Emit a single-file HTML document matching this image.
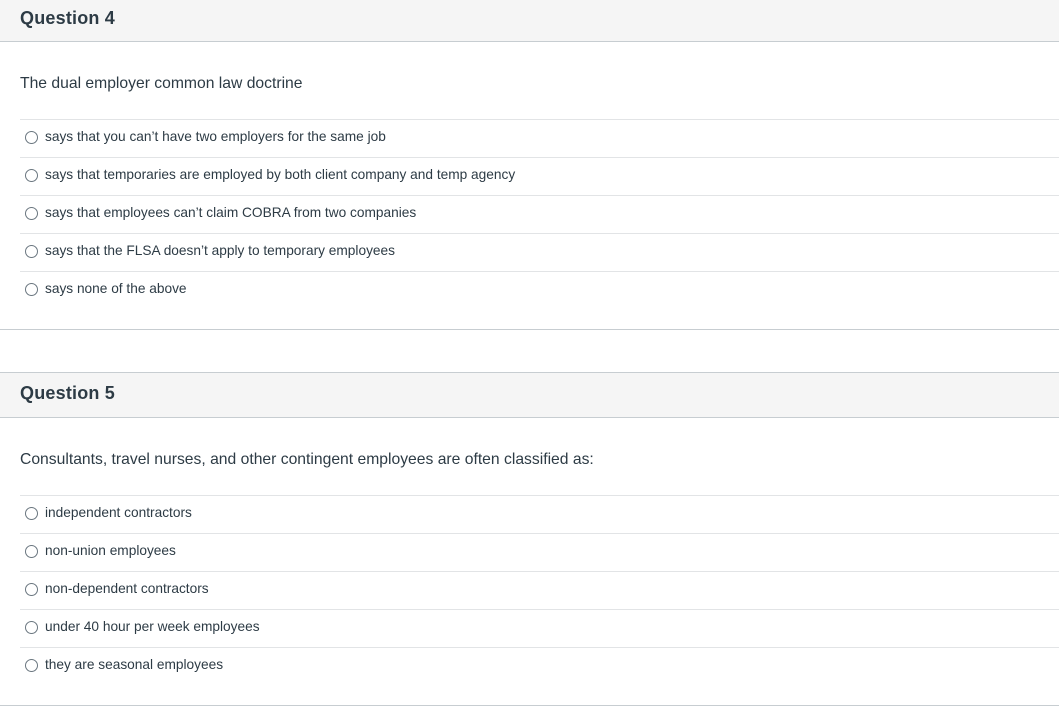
<!DOCTYPE html>
<html><head><meta charset="utf-8"><style>
*{margin:0;padding:0;box-sizing:border-box}
body{width:1059px;height:712px;background:#fff;font-family:"Liberation Sans",sans-serif;color:#2d3b45;position:relative;overflow:hidden}
.hd{position:absolute;left:0;width:1059px;background:#f5f5f5;border-bottom:1px solid #c7cdd1}
.hd span{position:absolute;left:20px;font-size:18px;font-weight:bold;color:#2d3b45;letter-spacing:0.2px}
.q{position:absolute;left:20px;font-size:15.7px;line-height:18px}
.ln{position:absolute;left:20px;right:0;height:1px;background:#e2e4e6}
.fl{position:absolute;left:0;right:0;height:1px;background:#c7cdd1}
.op{position:absolute;left:25px;font-size:13.7px;line-height:16px;display:flex;align-items:center}
.op i{display:inline-block;width:13px;height:13px;border:1px solid #6b7780;border-radius:50%;margin-right:7px}
</style></head><body>
<div class="hd" style="top:0;height:42px"><span style="top:8px">Question 4</span></div>
<div class="q" style="top:75px">The dual employer common law doctrine</div>
<div class="ln" style="top:119px"></div>
<div class="op" style="top:129px"><i></i>says that you can’t have two employers for the same job</div>
<div class="ln" style="top:157px"></div>
<div class="op" style="top:167px"><i></i>says that temporaries are employed by both client company and temp agency</div>
<div class="ln" style="top:195px"></div>
<div class="op" style="top:205px"><i></i>says that employees can’t claim COBRA from two companies</div>
<div class="ln" style="top:233px"></div>
<div class="op" style="top:243px"><i></i>says that the FLSA doesn’t apply to temporary employees</div>
<div class="ln" style="top:271px"></div>
<div class="op" style="top:281px"><i></i>says none of the above</div>
<div class="fl" style="top:329px"></div>

<div class="hd" style="top:372px;height:46px;border-top:1px solid #c7cdd1"><span style="top:10px">Question 5</span></div>
<div class="q" style="top:451px">Consultants, travel nurses, and other contingent employees are often classified as:</div>
<div class="ln" style="top:495px"></div>
<div class="op" style="top:505px"><i></i>independent contractors</div>
<div class="ln" style="top:533px"></div>
<div class="op" style="top:543px"><i></i>non-union employees</div>
<div class="ln" style="top:571px"></div>
<div class="op" style="top:581px"><i></i>non-dependent contractors</div>
<div class="ln" style="top:609px"></div>
<div class="op" style="top:619px"><i></i>under 40 hour per week employees</div>
<div class="ln" style="top:647px"></div>
<div class="op" style="top:657px"><i></i>they are seasonal employees</div>
<div class="fl" style="top:705px"></div>
</body></html>
